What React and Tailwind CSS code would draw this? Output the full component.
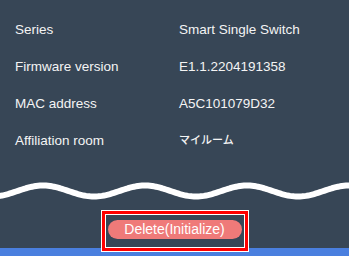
import React from 'react';

const rows = [
  ['Series', 'Smart Single Switch'],
  ['Firmware version', 'E1.1.2204191358'],
  ['MAC address', 'A5C101079D32'],
  ['Affiliation room', 'マイルーム', true],
];

// wavy divider line
function Wave() {
  const pts = [];
  for (let x = -4; x <= 353; x += 2) {
    const y = 32 - 5.5 * Math.cos((2 * Math.PI * (x - 43)) / 102);
    pts.push(`${x},${y.toFixed(2)}`);
  }
  return (
    <svg width="349" height="51" viewBox="0 0 349 51" className="block">
      <polyline points={pts.join(' ')} fill="none" stroke="#ffffff" strokeWidth="6" strokeLinejoin="round" />
    </svg>
  );
}

export default function App() {
  return (
    <div
      className="w-[349px] h-[256px] bg-[#374656] flex flex-col overflow-hidden"
      style={{ fontFamily: '"Liberation Sans", "Noto Sans CJK JP", sans-serif' }}
    >
      <div className="pt-[12px]">
        {rows.map(([label, value, jp]) => (
          <div key={label} className="h-[36.75px] flex items-center text-[13.5px] text-[#f4f4f4]">
            <div className="w-[179px] pl-[15px]">{label}</div>
            <div className={jp ? 'text-[11px] font-medium' : ''}>{value}</div>
          </div>
        ))}
      </div>

      <Wave />

      <div className="flex-1 flex items-center justify-center">
        <div className="relative">
          <button className="w-[134px] h-[19px] rounded-full bg-[#ef7a79] text-white text-[14px] leading-[19px] flex items-center justify-center">
            Delete(Initialize)
          </button>
          <div className="absolute -left-[7px] -right-[7px] -top-[10px] -bottom-[13px] border border-white">
            <div className="w-full h-full border-[3px] border-[#ff0000]">
              <div className="w-full h-full border border-white" />
            </div>
          </div>
        </div>
      </div>

      <div className="h-2 bg-[#4a7fdf]" />
    </div>
  );
}
